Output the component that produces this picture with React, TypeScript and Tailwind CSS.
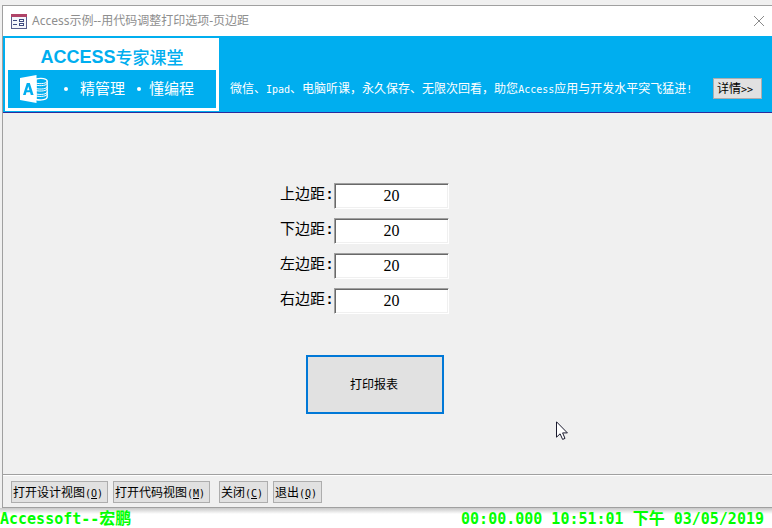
import { useState } from "react"

const margins = [
  { id: "top", label: "上边距" },
  { id: "bottom", label: "下边距" },
  { id: "left", label: "左边距" },
  { id: "right", label: "右边距" },
]

const commands = [
  { name: "打开设计视图", accessKey: "O", className: "w-[97px]" },
  { name: "打开代码视图", accessKey: "M", className: "w-[97px]" },
  { name: "关闭", accessKey: "C", className: "ml-1 w-[49px]" },
  { name: "退出", accessKey: "Q", className: "w-[49px]" },
]

function FormIcon() {
  return (
    <svg width="16" height="15" viewBox="0 0 16 15" shapeRendering="crispEdges" aria-hidden="true">
      <rect x="0.5" y="0.5" width="15" height="14" fill="#f4f6fb" stroke="#5a5f8c" />
      <rect width="16" height="3" fill="#b04468" />
      <path d="M2 6.500h4M2 10.500h4" stroke="#3d4a80" />
      <path d="M8.500 5.500h4v2h-4zM8.500 9.500h4v2h-4z" fill="#fff" stroke="#3d4a80" />
    </svg>
  )
}

function AccessIcon() {
  return (
    <svg width="28" height="28" viewBox="0 0 28 28" aria-hidden="true">
      <g fill="#00aeef" stroke="#fff" strokeWidth="1.300">
        <path d="M16 4v20.500c5 1.200 11.200 0 11.200-2.500V6c0-2.500-6.200-3.400-11.200-2z" />
        <path
          d="M16 8.200c5 1 11.200.3 11.200-2.200M16 13.600c5 1 11.200.3 11.200-2.200M16 19c5 1 11.200.3 11.200-2.200M16 10.200c5 1 11.200.3 11.200-2.200M16 15.600c5 1 11.200.3 11.200-2.200M16 21c5 1 11.200.3 11.200-2.200"
          fill="none"
          strokeWidth="1"
        />
      </g>
      <path d="M0 3 16.500 0v28L0 25z" fill="#fff" />
      <path
        d="M3 20 6.800 8h3L13.600 20h-2.800l-.8-2.700H6.500L5.700 20zM7.100 15.200h2.300l-1.100-4z"
        fill="#00aeef"
      />
    </svg>
  )
}

function TitleBar() {
  return (
    <div className="flex h-[30px] items-center bg-white pl-2 pr-[7px]">
      <FormIcon />
      <h1 className="ml-[5px] font-['Noto_Sans','Noto_Sans_CJK_SC',sans-serif] text-xs text-[#8e8e8e]">
        Access示例--用代码调整打印选项-页边距
      </h1>
      <button type="button" aria-label="关闭窗口" className="ml-auto text-[#8a8a8a]">
        <svg width="12" height="12" viewBox="0 0 12 12" stroke="currentColor" aria-hidden="true">
          <path d="m1 1 10 10M11 1 1 11" />
        </svg>
      </button>
    </div>
  )
}

function Logo() {
  return (
    <div className="flex h-[73px] w-[214px] shrink-0 flex-col bg-white px-[3px] pb-[3px]">
      <div className="flex h-8 items-center justify-center pt-[6px] text-[17px] font-medium text-[#00aeef]">
        <span className="font-['Liberation_Sans',sans-serif] text-lg font-bold">ACCESS</span>
        专家课堂
      </div>
      <div className="flex flex-1 items-center bg-[#00aeef] pl-3 text-[15px] leading-5 text-white">
        <AccessIcon />
        <span className="ml-4 size-1 rounded-full bg-white" />
        <span className="ml-3 pb-[2px]">精管理</span>
        <span className="ml-3 size-1 rounded-full bg-white" />
        <span className="ml-2 pb-[2px]">懂编程</span>
      </div>
    </div>
  )
}

function Banner() {
  return (
    <header className="flex h-[77px] border-b border-[#2b2b9c] bg-[#00aeef] pl-[2px] pr-[10px] pt-[2px]">
      <Logo />
      <p className="ml-[11px] mt-10 whitespace-nowrap text-xs leading-5 text-white">
        微信、<Latin>Ipad</Latin>、电脑听课，永久保存、无限次回看，助您<Latin>Access</Latin>
        应用与开发水平突飞猛进<Latin>!</Latin>
      </p>
      <button
        type="button"
        className="ml-auto mt-10 h-[21px] w-[49px] shrink-0 whitespace-nowrap border border-[#adadad] bg-[#e1e1e1] pl-[3px] text-left text-xs leading-none">
        详情<Latin>&gt;&gt;</Latin>
      </button>
    </header>
  )
}

// half-width characters take exactly half of a 12px full-width one
function Latin({ children }: { children: React.ReactNode }) {
  return <span className="font-['DejaVu_Sans_Mono',monospace] text-[10px]">{children}</span>
}

function MarginForm() {
  const [values, setValues] = useState<Record<string, string>>({
    top: "20",
    bottom: "20",
    left: "20",
    right: "20",
  })

  return (
    <form className="flex-1 pl-[277px] pt-[70px]" onSubmit={(e) => e.preventDefault()}>
      <div className="flex flex-col gap-[9px]">
        {margins.map(({ id, label }) => (
          <div key={id} className="flex h-[26px]">
            <label htmlFor={id} className="w-[54px] whitespace-nowrap text-[15px] leading-5">
              {label}
              <span className="font-['Liberation_Mono',monospace] font-bold">:</span>
            </label>
            <input
              id={id}
              type="text"
              value={values[id]}
              onChange={(e) => setValues({ ...values, [id]: e.target.value })}
              className="h-[26px] w-[115px] border border-white border-l-[#a0a0a0] border-t-[#a0a0a0] bg-white text-center font-['Liberation_Serif',serif] text-base leading-none shadow-[inset_1px_1px_0_#696969,inset_-1px_-1px_0_#f0f0f0] outline-none"
            />
          </div>
        ))}
      </div>
      <button
        type="submit"
        className="ml-[26px] mt-[41px] h-[59px] w-[138px] border-2 border-[#0078d7] bg-[#e1e1e1] pb-[2px] pr-[2px] text-xs">
        打印报表
      </button>
    </form>
  )
}

function CommandBar() {
  return (
    <footer className="flex h-[33px] gap-[5px] border-t border-[#a0a0a0] pl-2 pt-[6px] shadow-[inset_0_1px_0_#fff]">
      {commands.map(({ name, accessKey, className }) => (
        <button
          key={name}
          type="button"
          className={`${className} h-[22px] whitespace-nowrap border border-[#adadad] bg-[#e1e1e1] pl-px text-left text-xs leading-none`}>
          {name}
          <Latin>
            (<u>{accessKey}</u>)
          </Latin>
        </button>
      ))}
    </footer>
  )
}

function StatusLine() {
  return (
    <div className="flex h-5 justify-between whitespace-pre bg-linear-to-b from-[#c8c8c8] to-white to-30% pr-2 pt-px font-['DejaVu_Sans_Mono',monospace] text-[15px] font-bold leading-[19px] text-[#00ff00]">
      <span>
        Accessoft--<Wide>宏鹏</Wide>
      </span>
      <span>
        00:00.000 10:51:01 <Wide>下午</Wide> 03/05/2019
      </span>
    </div>
  )
}

function Wide({ children }: { children: React.ReactNode }) {
  return (
    <span className="font-['Noto_Sans_CJK_SC',sans-serif] text-base leading-none">{children}</span>
  )
}

export default function App() {
  return (
    <div className="relative flex min-h-screen flex-col bg-[#f0f0f0] font-['Noto_Sans_CJK_SC',sans-serif] text-black">
      <main className="ml-[2px] mt-[5px] flex flex-1 flex-col border-b border-l border-t border-[#a0a0a0] bg-[#f0f0f0]">
        <TitleBar />
        <Banner />
        <MarginForm />
        <CommandBar />
      </main>
      <StatusLine />
      <svg
        className="pointer-events-none absolute left-[556px] top-[421px]"
        width="12"
        height="20"
        viewBox="0 0 12 20"
        aria-hidden="true">
        <path
          d="M.5 .8v15.400l3.600-3.400 2.500 5.600 2.400-1-2.400-5.500h4.800z"
          fill="#fff"
          stroke="#1a1a2e"
        />
      </svg>
    </div>
  )
}
